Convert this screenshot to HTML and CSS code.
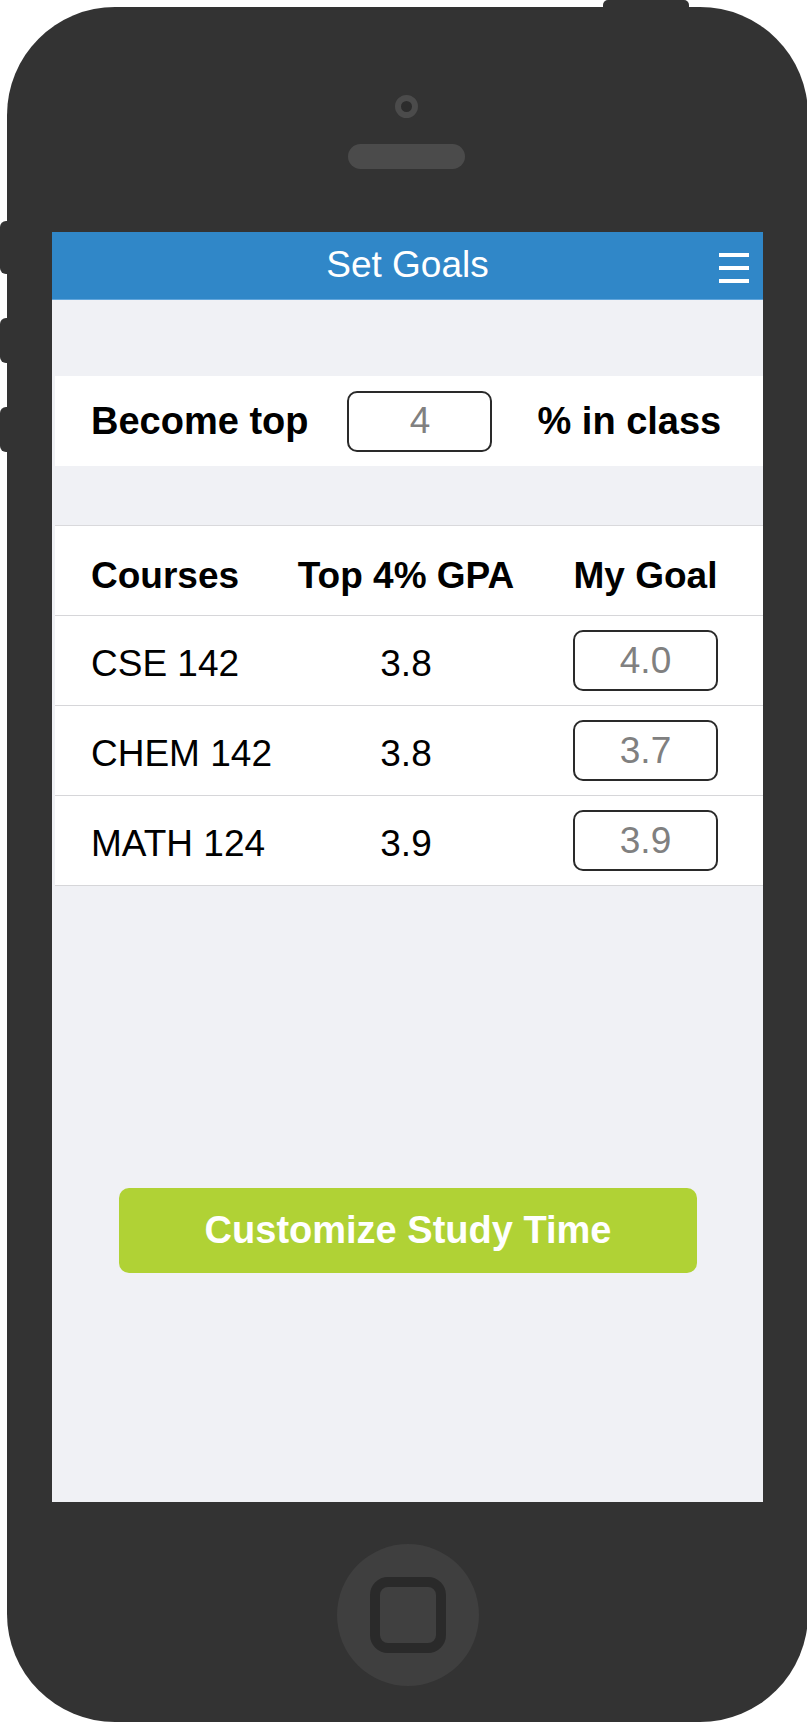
FILE: index.html
```html
<!DOCTYPE html>
<html lang="en">
<head>
<meta charset="utf-8">
<title>Set Goals</title>
<link rel="stylesheet" href="styles.css">
</head>
<body>
<div class="page">
  <div class="top-strip"><div class="power-btn"></div></div>
  <div class="main">
    <div class="side">
      <div class="side-btn side-btn-a"></div>
      <div class="side-btn side-btn-b"></div>
      <div class="side-btn side-btn-c"></div>
    </div>
    <div class="phone">
      <div class="camera"></div>
      <div class="speaker"></div>
      <div class="screen">
        <div class="app-header">
          <div class="hdr-spacer"></div>
          <div class="hdr-title">Set Goals</div>
          <div class="hamburger"><span></span><span></span><span></span></div>
        </div>
        <div class="goal-row">
          <span class="goal-label">Become top</span>
          <span class="field field-goal">4</span>
          <span class="goal-suffix">% in class</span>
        </div>
        <div class="table">
          <div class="trow thead">
            <div class="cell c1">Courses</div>
            <div class="cell c2">Top 4% GPA</div>
            <div class="cell c3">My Goal</div>
          </div>
          <div class="trow">
            <div class="cell c1">CSE 142</div>
            <div class="cell c2">3.8</div>
            <div class="c3"><span class="field">4.0</span></div>
          </div>
          <div class="trow">
            <div class="cell c1">CHEM 142</div>
            <div class="cell c2">3.8</div>
            <div class="c3"><span class="field">3.7</span></div>
          </div>
          <div class="trow">
            <div class="cell c1">MATH 124</div>
            <div class="cell c2">3.9</div>
            <div class="c3"><span class="field">3.9</span></div>
          </div>
        </div>
        <div class="cta">Customize Study Time</div>
      </div>
      <div class="home">
        <div class="home-inner"></div>
      </div>
    </div>
  </div>
</div>
</body>
</html>
```
FILE: styles.css
```css
html, body {
  margin: 0;
  padding: 0;
  width: 807px;
  height: 1722px;
  overflow: hidden;
  background: #ffffff;
  font-family: "Liberation Sans", Arial, sans-serif;
}

.page {
  display: flex;
  flex-direction: column;
}

.top-strip {
  height: 7px;
  display: flex;
  padding-left: 603px;
}

.power-btn {
  width: 86px;
  height: 8px;
  background: #333333;
  border-radius: 5px 5px 0 0;
}

.main {
  display: flex;
}

.side {
  width: 7px;
  flex: none;
  display: flex;
  flex-direction: column;
  padding-top: 214px;
}

.side-btn {
  width: 8px;
  background: #333333;
  border-radius: 6px 0 0 6px;
}

.side-btn-a { height: 53px; }
.side-btn-b { height: 45px; margin-top: 44px; }
.side-btn-c { height: 45px; margin-top: 44px; }

.phone {
  width: 801px;
  height: 1715px;
  flex: none;
  background: #333333;
  border-radius: 108px;
  display: flex;
  flex-direction: column;
  align-items: center;
}

.camera {
  width: 23px;
  height: 23px;
  box-sizing: border-box;
  margin-top: 88px;
  margin-right: 3px;
  border-radius: 50%;
  background: #2c2c2c;
  border: 6px solid #4b4b4b;
}

.speaker {
  width: 117px;
  height: 25px;
  margin-top: 26px;
  margin-right: 3px;
  border-radius: 13px;
  background: #4b4b4b;
}

.screen {
  margin-top: 63px;
  width: 711px;
  height: 1270px;
  background: #f0f1f5;
  display: flex;
  flex-direction: column;
}

.app-header {
  height: 68px;
  box-sizing: border-box;
  padding-bottom: 1px;
  background: #3087c8;
  border-bottom: 1px solid #62a6dc;
  display: grid;
  grid-template-columns: 1fr auto 1fr;
  align-items: center;
}

.hdr-title {
  color: #ffffff;
  font-size: 37px;
  white-space: nowrap;
}

.hamburger {
  justify-self: end;
  align-self: start;
  margin-top: 21px;
  margin-right: 14px;
  width: 30px;
  display: flex;
  flex-direction: column;
  gap: 9px;
}

.hamburger span {
  display: block;
  height: 4px;
  background: #ffffff;
}

.goal-row {
  margin-top: 76px;
  margin-left: 3px;
  height: 90px;
  background: #ffffff;
  display: flex;
  align-items: center;
  padding-left: 36px;
  font-size: 38px;
  font-weight: bold;
  color: #000000;
  white-space: nowrap;
}

.field {
  width: 145px;
  height: 61px;
  box-sizing: border-box;
  border: 2px solid #2a2a2a;
  border-radius: 10px;
  background: #ffffff;
  color: #808080;
  font-size: 37px;
  font-weight: normal;
  display: flex;
  align-items: center;
  justify-content: center;
}

.field-goal {
  margin-left: 39px;
}

.goal-suffix {
  margin-left: 45px;
}

.table {
  margin-top: 59px;
  margin-left: 3px;
  background: #ffffff;
  border-top: 1px solid #d9d9dc;
}

.trow {
  height: 89px;
  border-bottom: 1px solid #d6d6d9;
  display: grid;
  grid-template-columns: 205px 220px 1fr;
  align-items: center;
  padding: 0 45px 0 36px;
  font-size: 37px;
  color: #000000;
  white-space: nowrap;
}

.cell {
  padding-top: 6px;
}

.thead {
  font-weight: bold;
}

.thead .cell {
  padding-top: 11px;
}

.c2 {
  text-align: center;
}

.c3 {
  justify-self: end;
  width: 145px;
  text-align: center;
  display: flex;
  justify-content: center;
}

.cta {
  margin-top: 302px;
  margin-left: 67px;
  width: 578px;
  height: 85px;
  border-radius: 10px;
  background: #b0d235;
  color: #ffffff;
  font-size: 38px;
  font-weight: bold;
  display: flex;
  align-items: center;
  justify-content: center;
  white-space: nowrap;
}

.home {
  margin-top: 42px;
  width: 142px;
  height: 142px;
  border-radius: 50%;
  background: #3f3f3f;
  display: flex;
  align-items: center;
  justify-content: center;
}

.home-inner {
  width: 76px;
  height: 76px;
  box-sizing: border-box;
  border: 10px solid #2a2a2a;
  border-radius: 18px;
  background: #404040;
}
```
